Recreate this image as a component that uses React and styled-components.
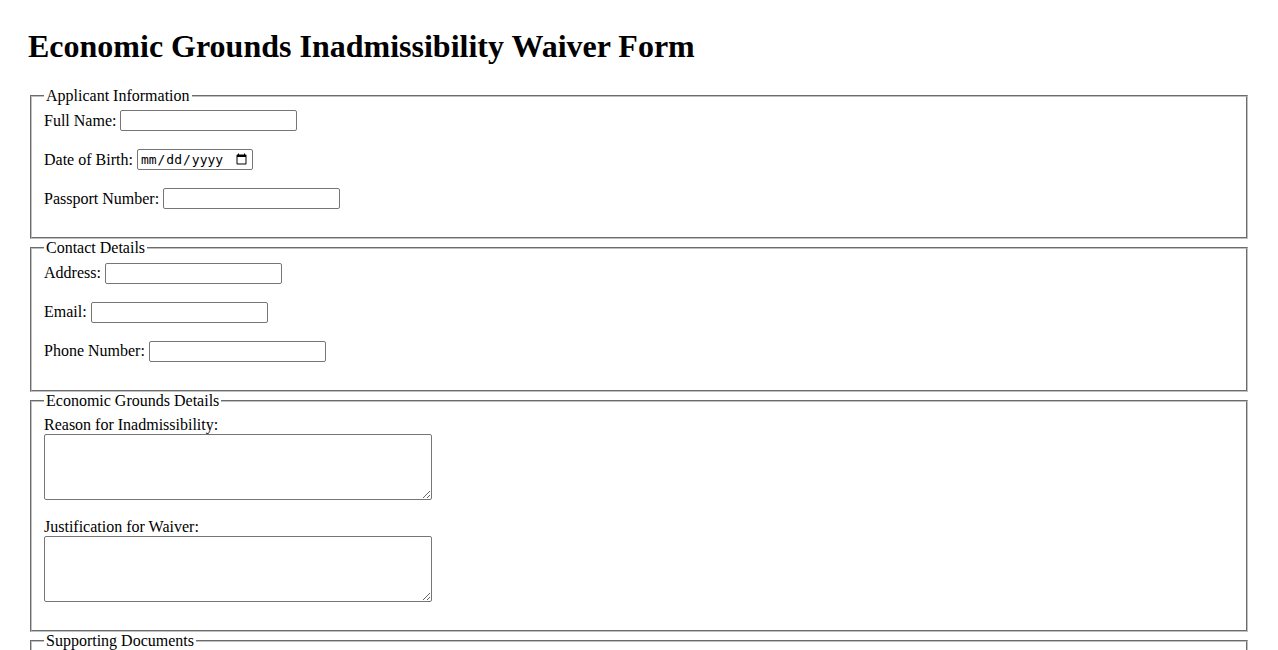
import React from "react";
import styled, { createGlobalStyle } from "styled-components";

const Global = createGlobalStyle`
  html, body { margin: 0; padding: 0; background: #fff; }
  body {
    font-family: "Liberation Serif", "Times New Roman", serif;
    font-size: 16px;
    color: #000;
  }
  *, *::before, *::after { box-sizing: border-box; }
`;

const Page = styled.main`
  padding: 28px;
`;

const Title = styled.h1`
  margin: 0 0 22px;
  font-size: 32px;
  font-weight: bold;
  line-height: 36.8px;
`;

const Form = styled.form`
  display: block;
`;

const Section = styled.fieldset`
  margin: 0 2px;
  padding: 5.6px 12px 10px;
  border: 2px groove rgb(192, 192, 192);
  min-width: 0;
`;

const Legend = styled.legend`
  padding: 0 2px;
  line-height: normal;
`;

const Row = styled.div`
  display: flex;
  align-items: center;
  gap: 4px;
  height: 21px;
  margin-bottom: 18px;
`;

const Stack = styled.div`
  margin-bottom: 18px;
`;

const Label = styled.label`
  display: ${(p) => (p.$block ? "block" : "inline")};
  line-height: 18px;
  white-space: nowrap;
`;

const TextInput = styled.input`
  width: ${(p) => p.$w || 177}px;
  height: 21px;
  padding: 1px 2px;
  border: 1px solid #767676;
  border-radius: 2px;
  background: #fff;
  font-family: "DejaVu Sans Mono", "Liberation Mono", monospace;
  font-size: 13px;
  color: #000;
  flex: none;
`;

const TextArea = styled.textarea`
  display: block;
  width: 388px;
  height: 66px;
  padding: 2px;
  border: 1px solid #767676;
  border-radius: 2px;
  background: #fff;
  font-family: "DejaVu Sans Mono", "Liberation Mono", monospace;
  font-size: 13.33px;
  resize: both;
`;

const SubmitButton = styled.button`
  margin-top: 16px;
  font-family: "Liberation Sans", Arial, sans-serif;
  font-size: 13.33px;
  padding: 1px 6px;
`;

function Field({ id, label, type = "text", width }) {
  return (
    <Row>
      <Label htmlFor={id}>{label}</Label>
      <TextInput id={id} name={id} type={type} $w={width} />
    </Row>
  );
}

function AreaField({ id, label }) {
  return (
    <Stack>
      <Label htmlFor={id} $block>
        {label}
      </Label>
      <TextArea id={id} name={id} rows={4} />
    </Stack>
  );
}

export default function App() {
  return (
    <>
      <Global />
      <Page>
        <Title>Economic Grounds Inadmissibility Waiver Form</Title>
        <Form onSubmit={(e) => e.preventDefault()}>
          <Section>
            <Legend>Applicant Information</Legend>
            <Field id="fullName" label="Full Name:" />
            <Field id="dob" label="Date of Birth:" type="date" width={116} />
            <Field id="passport" label="Passport Number:" />
          </Section>
          <Section>
            <Legend>Contact Details</Legend>
            <Field id="address" label="Address:" />
            <Field id="email" label="Email:" type="email" />
            <Field id="phone" label="Phone Number:" type="tel" />
          </Section>
          <Section>
            <Legend>Economic Grounds Details</Legend>
            <AreaField id="reason" label="Reason for Inadmissibility:" />
            <AreaField id="justification" label="Justification for Waiver:" />
          </Section>
          <Section>
            <Legend>Supporting Documents</Legend>
            <Field id="documents" label="Upload Documents:" type="file" width={250} />
          </Section>
          <SubmitButton type="submit">Submit</SubmitButton>
        </Form>
      </Page>
    </>
  );
}
